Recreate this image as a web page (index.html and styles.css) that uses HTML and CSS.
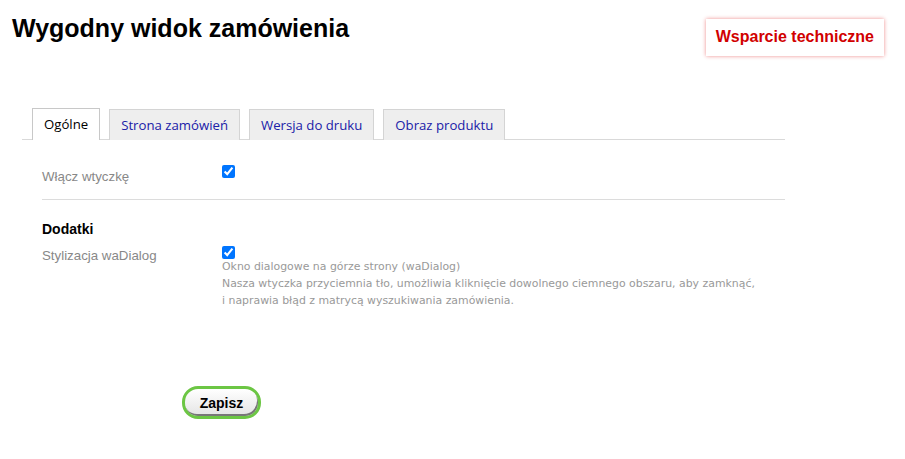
FILE: index.html
```html
<!DOCTYPE html>
<html lang="pl">
<head>
<meta charset="utf-8">
<link rel="stylesheet" href="styles.css">
</head>
<body>
<div class="header">
  <h1 class="title">Wygodny widok zamówienia</h1>
  <a class="support" href="#">Wsparcie techniczne</a>
</div>
<div class="panel">
  <ul class="tabs">
    <li class="tab active">Ogólne</li>
    <li class="tab">Strona zamówień</li>
    <li class="tab">Wersja do druku</li>
    <li class="tab">Obraz produktu</li>
  </ul>
  <div class="content">
    <div class="field first">
      <div class="label">Włącz wtyczkę</div>
      <div class="value"><input type="checkbox" checked></div>
    </div>
    <div class="sep"></div>
    <h3 class="section">Dodatki</h3>
    <div class="field">
      <div class="label">Stylizacja waDialog</div>
      <div class="value">
        <input type="checkbox" checked>
        <div class="hint">Okno dialogowe na górze strony (waDialog)<br>Nasza wtyczka przyciemnia tło, umożliwia kliknięcie dowolnego ciemnego obszaru, aby zamknąć,<br>i naprawia błąd z matrycą wyszukiwania zamówienia.</div>
      </div>
    </div>
  </div>
</div>
<div class="actions">
  <button class="save">Zapisz</button>
</div>
</body>
</html>
```
FILE: styles.css
```css
html, body {
  margin: 0;
  padding: 0;
  background: #fff;
  font-family: "Liberation Sans", Arial, sans-serif;
}
.header {
  display: flex;
  justify-content: space-between;
  align-items: flex-start;
  padding: 13px 21px 0 12px;
}
.title {
  margin: 0;
  font-size: 25px;
  font-weight: bold;
  color: #000;
  line-height: 30px;
}
.support {
  margin-top: 6px;
  display: block;
  padding: 9px 10px 10px;
  font-size: 16px;
  font-weight: bold;
  color: #d10000;
  text-decoration: none;
  background: #fff;
  box-shadow: 0 0 4px rgba(220, 0, 0, 0.45);
  line-height: 18px;
}
.panel {
  margin: 52px 0 0 22px;
  width: 763px;
}
.tabs {
  display: flex;
  list-style: none;
  margin: 0;
  padding: 0 0 0 10px;
  gap: 9px;
  border-bottom: 1px solid #d9d9d9;
  height: 31px;
  align-items: flex-end;
}
.tab {
  font-family: "Open Sans", "DejaVu Sans", sans-serif;
  font-size: 13.2px;
  color: #2020a8;
  background: #eeeeee;
  border: 1px solid #d4d4d4;
  border-bottom: none;
  padding: 0 11px;
  height: 30px;
  line-height: 31px;
  margin-bottom: -1px;
}
.tab.active {
  background: #fff;
  color: #000;
  border-color: #c8c8c8;
  height: 31px;
  padding: 0 11px;
}
.content {
  padding: 0 0 0 20px;
}
.field {
  display: flex;
}
.field.first {
  padding-top: 25px;
  height: 34px;
}
.label {
  width: 180px;
  font-size: 13.3px;
  color: #888;
  line-height: 16px;
  padding-top: 4px;
}
.value input {
  margin: 0;
  width: 13px;
  height: 13px;
  display: block;
}
.sep {
  border-top: 1px solid #dcdcdc;
  height: 0;
}
.section {
  margin: 21px 0 0 0;
  font-size: 14px;
  font-weight: bold;
  color: #000;
  line-height: 16px;
}
.field + .field, .section + .field {
  padding-top: 9px;
}
.section + .field .label {
  padding-top: 2px;
}
.hint {
  font-family: "DejaVu Sans", Verdana, sans-serif;
  font-size: 10.9px;
  color: #999;
  line-height: 17px;
  margin-top: -1px;
}
.actions {
  padding: 77px 0 0 182px;
}
.save {
  font-family: "Liberation Sans", Arial, sans-serif;
  font-size: 14px;
  font-weight: bold;
  color: #000;
  width: 79px;
  height: 33px;
  border: 3px solid #6cc644;
  border-radius: 16px;
  background: linear-gradient(#ffffff, #e4e4e4);
  box-shadow: inset -1px -2px 0 #777;
  padding: 0;
}
```
